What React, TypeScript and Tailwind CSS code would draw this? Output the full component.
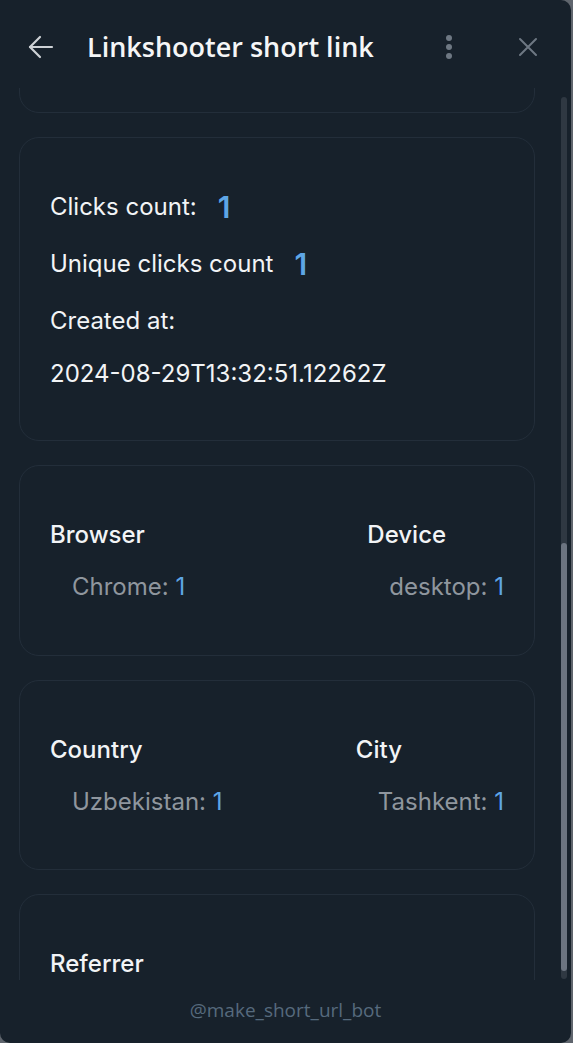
const sans = "font-['Inter','Liberation_Sans',sans-serif]";

function StatRow({ label, value }: { label: string; value?: string }) {
  return (
    <div className="flex items-center h-[28px]">
      <span className="text-[24px] text-[#f2f4f6]">{label}</span>
      {value && <span className="ml-[21px] text-[30px] font-semibold text-[#5ea6e6] leading-none">{value}</span>}
    </div>
  );
}

function Column({ title, items }: { title: string; items: [string, number][] }) {
  return (
    <div className="flex flex-col">
      <div className="h-[28px] flex items-center text-[24px] font-medium text-[#f2f4f6]">{title}</div>
      {items.map(([k, v]) => (
        <div key={k} className="pl-[22px] mt-[24px] h-[28px] flex items-center text-[24px] text-[#8f969e]">
          {k}:&nbsp;<span className="text-[#5ea6e6]">{v}</span>
        </div>
      ))}
    </div>
  );
}

function Card({ children, className = '' }: { children?: React.ReactNode; className?: string }) {
  return (
    <div className={`rounded-[20px] border border-[#232e3a] px-[30px] ${className}`}>{children}</div>
  );
}

export default function App() {
  return (
    <div className="w-[573px] h-[1043px] bg-[#5f656d] overflow-hidden">
      <div className={`w-[571px] h-[1043px] bg-[#17212b] rounded-tr-[10px] rounded-b-[10px] flex flex-col ${sans}`}>
        {/* header */}
        <div className="h-[88px] shrink-0 flex items-center pt-[6px] pl-[28px] pr-[33px]">
          <svg width="26" height="24" viewBox="0 0 26 24" fill="none" stroke="#cdd1d5" strokeWidth="2.2" strokeLinecap="round" strokeLinejoin="round">
            <path d="M24 12H2" />
            <path d="M12 2 2 12l10 10" />
          </svg>
          <h1 className="ml-[33px] text-[27px] font-semibold text-[#f5f6f7] font-['Open_Sans','Liberation_Sans',sans-serif]">
            Linkshooter short link
          </h1>
          <div className="ml-auto mr-[66px] flex flex-col gap-[3px]">
            <span className="w-[6px] h-[6px] rounded-full bg-[#6e7883]" />
            <span className="w-[6px] h-[6px] rounded-full bg-[#6e7883]" />
            <span className="w-[6px] h-[6px] rounded-full bg-[#6e7883]" />
          </div>
          <svg width="20" height="20" viewBox="0 0 20 20" stroke="#6e7883" strokeWidth="2" strokeLinecap="round">
            <path d="M2 2l16 16M18 2 2 18" />
          </svg>
        </div>

        {/* scroll area */}
        <div className="h-[892px] shrink-0 flex overflow-hidden">
          <div className="flex-1 pl-[19px] pr-[26px] flex flex-col gap-[24px]">
            <Card className="h-[100px] -mt-[75px] shrink-0" />
            <Card className="h-[304px] shrink-0 pt-[55px]">
              <StatRow label="Clicks count:" value="1" />
              <div className="mt-[29px]"><StatRow label="Unique clicks count" value="1" /></div>
              <div className="mt-[29px]"><StatRow label="Created at:" /></div>
              <div className="mt-[25px]"><StatRow label="2024-08-29T13:32:51.12262Z" /></div>
            </Card>
            <Card className="h-[191px] shrink-0 pt-[55px] flex justify-between">
              <Column title="Browser" items={[['Chrome', 1]]} />
              <Column title="Device" items={[['desktop', 1]]} />
            </Card>
            <Card className="h-[190px] shrink-0 pt-[55px] flex justify-between">
              <Column title="Country" items={[['Uzbekistan', 1]]} />
              <Column title="City" items={[['Tashkent', 1]]} />
            </Card>
            <Card className="h-[200px] shrink-0 pt-[55px]">
              <Column title="Referrer" items={[]} />
            </Card>
          </div>
          <div className="w-[6px] mr-[4px] mt-[9px] mb-[1px] rounded-full bg-[#2f3842] flex flex-col">
            <div className="h-[446px] shrink-0" />
            <div className="h-[428px] rounded-full bg-[#6c7480]" />
          </div>
        </div>

        {/* footer */}
        <div className="flex-1 flex items-center justify-center pb-[2px]">
          <span className="text-[19px] text-[#566a7d] font-['Open_Sans','Liberation_Sans',sans-serif]">@make_short_url_bot</span>
        </div>
      </div>
    </div>
  );
}
